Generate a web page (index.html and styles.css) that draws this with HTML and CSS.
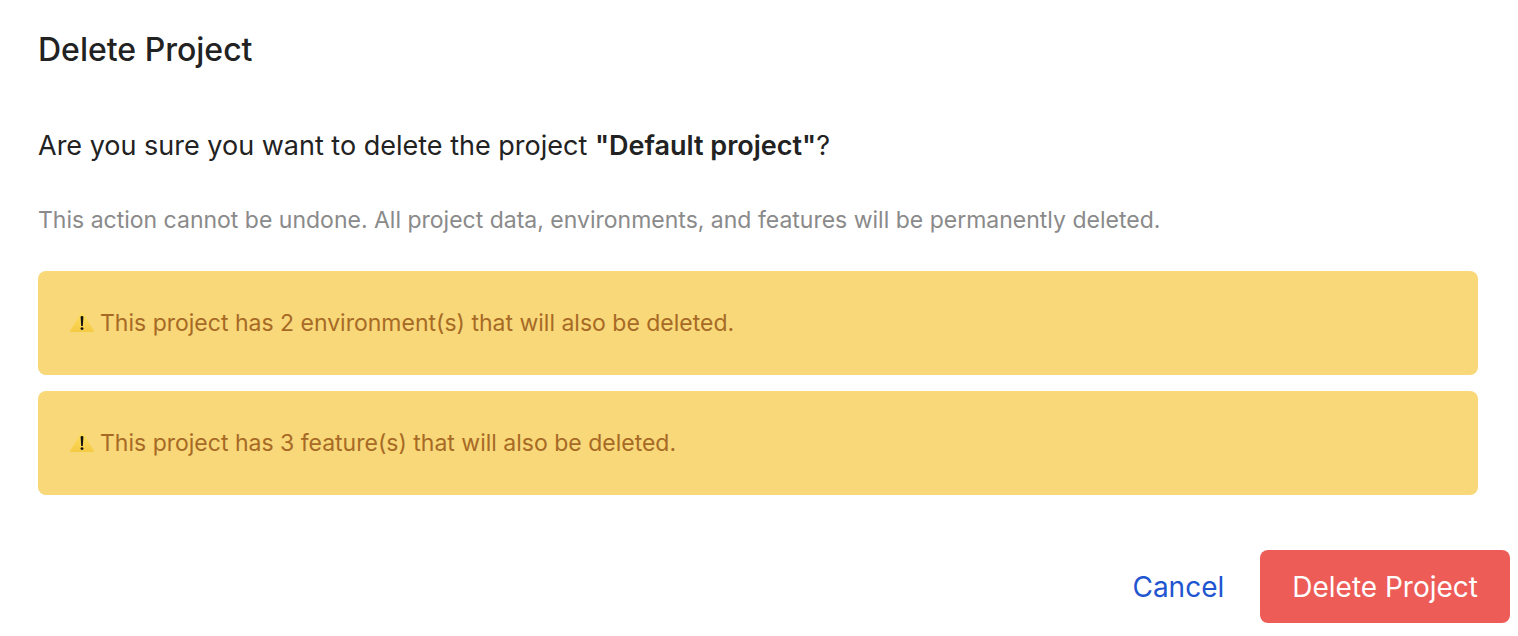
FILE: index.html
```html
<!DOCTYPE html>
<html lang="en">
<head>
<meta charset="utf-8">
<title>Delete Project</title>
<link rel="stylesheet" href="styles.css">
</head>
<body>
<main class="dialog" role="dialog" aria-labelledby="dialog-title">
  <div class="content">
    <h1 class="title" id="dialog-title">Delete Project</h1>
    <p class="question">Are you sure you want to delete the project <strong>"Default project"</strong>?</p>
    <p class="note">This action cannot be undone. All project data, environments, and features will be permanently deleted.</p>
    <div class="warnings">
      <p class="warning">
        <svg class="warning-icon" viewBox="0 0 24 24" aria-hidden="true"><defs><linearGradient id="sign-fill" x1="0" y1="0" x2="0" y2="1"><stop offset="0" stop-color="#fde064"/><stop offset="1" stop-color="#f5c943"/></linearGradient></defs><path fill="url(#sign-fill)" d="M11.2 1.400q.8-1.200 1.600 0L23.700 19.500q.7 1.500-.9 1.500H1.200q-1.600 0-.9-1.500Z"/><path class="mark" d="M10.600 6q0-1 1.400-1t1.400 1L12.800 15h-1.600Z"/><circle class="mark" cx="12" cy="17.600" r="1.400"/></svg>
        <span>This project has 2 environment(s) that will also be deleted.</span>
      </p>
      <p class="warning">
        <svg class="warning-icon" viewBox="0 0 24 24" aria-hidden="true"><path fill="url(#sign-fill)" d="M11.2 1.400q.8-1.200 1.600 0L23.700 19.500q.7 1.500-.9 1.500H1.200q-1.600 0-.9-1.500Z"/><path class="mark" d="M10.600 6q0-1 1.400-1t1.400 1L12.800 15h-1.600Z"/><circle class="mark" cx="12" cy="17.600" r="1.400"/></svg>
        <span>This project has 3 feature(s) that will also be deleted.</span>
      </p>
    </div>
  </div>
  <div class="actions">
    <button class="button cancel" type="button">Cancel</button>
    <button class="button delete" type="button">Delete Project</button>
  </div>
</main>
</body>
</html>
```
FILE: styles.css
```css
* { box-sizing: border-box; }
body { margin: 0; background: #fff; color: #222; font-family: Inter, "Liberation Sans", sans-serif; }
.dialog { padding: 30px 8px 13px 38px; }
.content { padding-right: 32px; }
.title { margin: 0 0 56px; font-size: 32px; line-height: 40px; font-weight: 500; }
.question { margin: 0 0 36px; font-size: 27px; line-height: 40px; }
.question strong { font-weight: 600; }
.note { margin: 0 0 33px; font-size: 23px; line-height: 36px; color: #8a8a8a; }
.warnings { display: grid; gap: 16px; }
.warning { display: flex; align-items: center; gap: 6px; margin: 0; padding: 32px; border-radius: 8px; background: #f8d878; color: #a76a26; font-size: 23px; line-height: 40px; }
.warning-icon { width: 24px; height: 24px; flex: none; }
.mark { fill: #111; }
.actions { display: flex; justify-content: flex-end; gap: 4px; margin-top: 55px; }
.button { border: 0; border-radius: 8px; padding: 17px 32px 16px; font: 400 28px/40px Inter, "Liberation Sans", sans-serif; cursor: pointer; }
.cancel { background: none; color: #1f55d0; }
.delete { background: #ed5c57; color: #fff; }
```
